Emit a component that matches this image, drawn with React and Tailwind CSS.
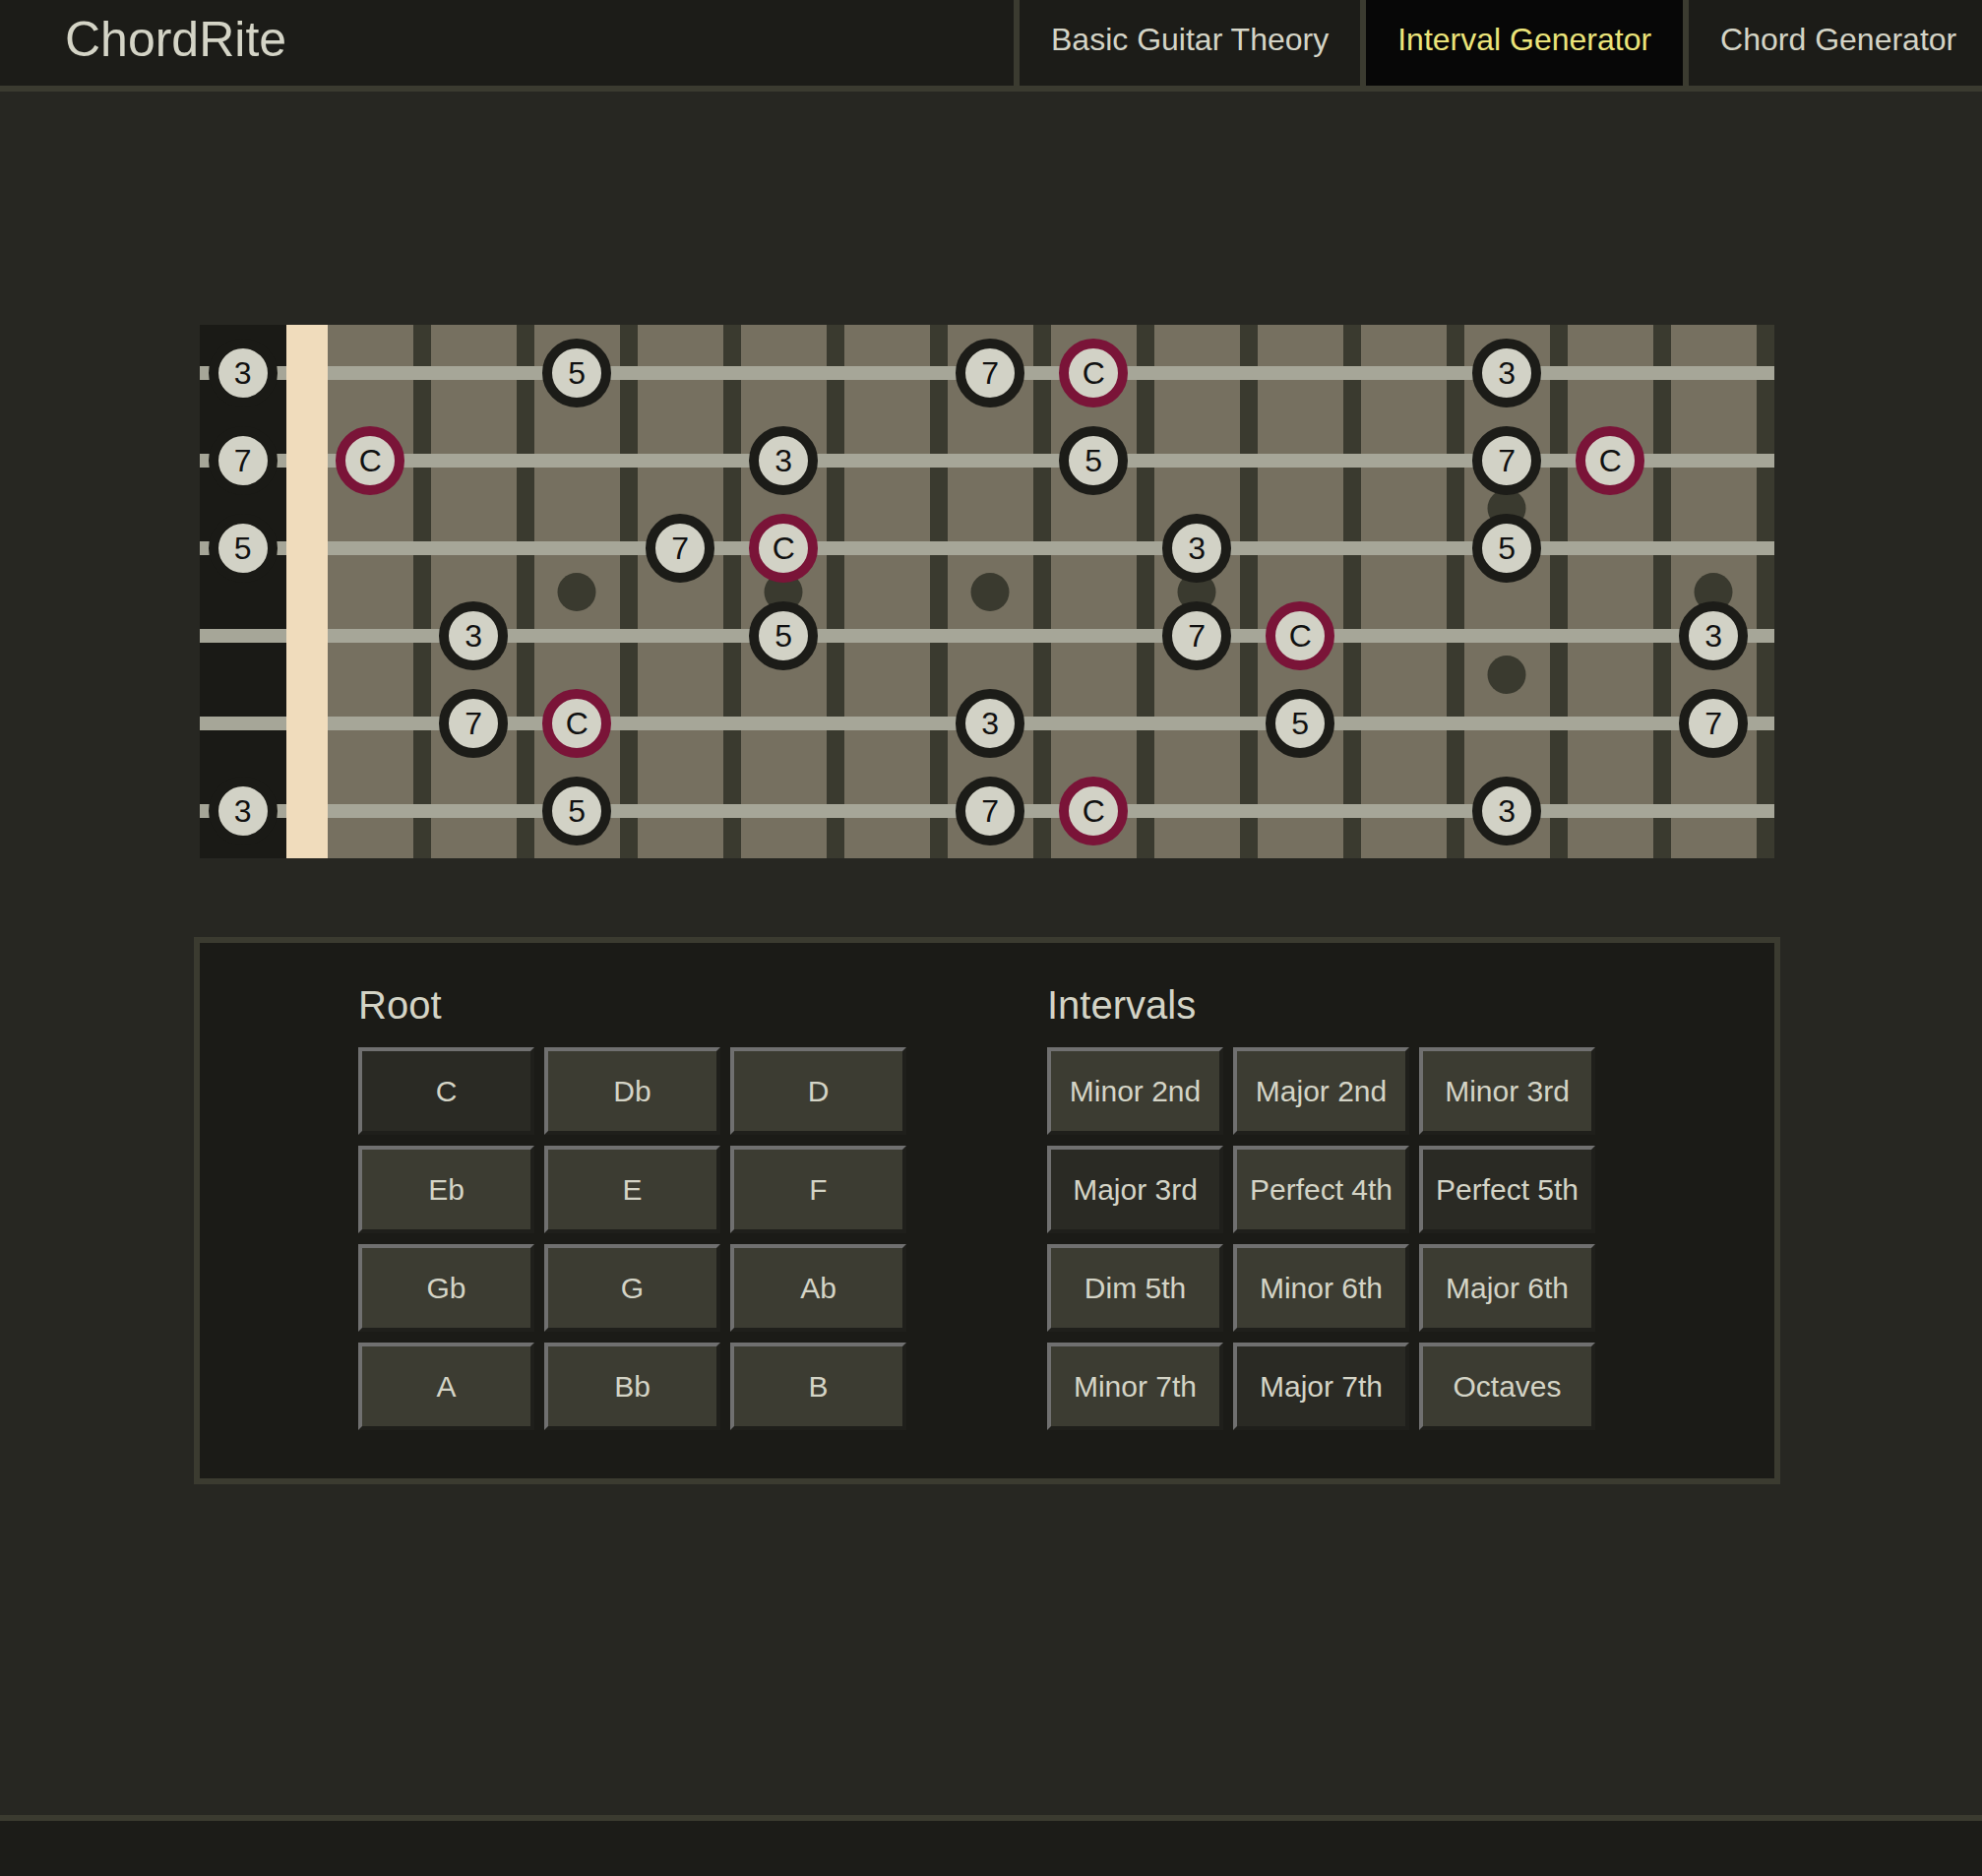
import React from "react";

const stringRows = [
    { open: "3", notes: { 2: "5", 6: "7", 7: "C", 11: "3" } },
    { open: "7", notes: { 0: "C", 4: "3", 7: "5", 11: "7", 12: "C" } },
    { open: "5", notes: { 3: "7", 4: "C", 8: "3", 11: "5" } },
    { open: null, notes: { 1: "3", 4: "5", 8: "7", 9: "C", 13: "3" } },
    { open: null, notes: { 1: "7", 2: "C", 6: "3", 9: "5", 13: "7" } },
    { open: "3", notes: { 2: "5", 6: "7", 7: "C", 11: "3" } },
];

const singleDots = [2, 4, 6, 8, 13];
const doubleDots = [11];

const roots = ["C", "Db", "D", "Eb", "E", "F", "Gb", "G", "Ab", "A", "Bb", "B"];
const intervals = [
    "Minor 2nd", "Major 2nd", "Minor 3rd",
    "Major 3rd", "Perfect 4th", "Perfect 5th",
    "Dim 5th", "Minor 6th", "Major 6th",
    "Minor 7th", "Major 7th", "Octaves",
];
const activeRoots = ["C"];
const activeIntervals = ["Major 3rd", "Perfect 5th", "Major 7th"];

const Marker = ({ label, ring }) => (
    <div
        className={`relative z-10 col-start-1 row-start-1 w-[70px] h-[70px] rounded-full border-[10px] ${ring} bg-[#d2d2c6] flex items-center justify-center text-[32px] leading-none text-[#111]`}
    >
        {label}
    </div>
);

const StringCell = ({ children }) => (
    <div className="grid h-[89px] place-items-center">
        <div className="col-start-1 row-start-1 w-full h-[14px] bg-[#a6a698]" />
        {children}
    </div>
);

const Fretboard = () => (
    <div className="flex h-[542px] ml-[6px]">
        <div className="w-[87.5px] bg-[#1a1a16] py-[4px] flex flex-col">
            {stringRows.map((row, r) => (
                <StringCell key={r}>
                    {row.open && <Marker label={row.open} ring="border-[#1a1a16]" />}
                </StringCell>
            ))}
        </div>
        <div className="w-[42px] bg-[#f0dcbc]" />
        {Array.from({ length: 14 }).map((_, c) => (
            <React.Fragment key={c}>
                <div className="relative w-[87.5px] bg-[#767060] py-[4px] flex flex-col">
                    {singleDots.includes(c) && (
                        <div className="absolute left-1/2 -translate-x-1/2 top-[252px] w-[39px] h-[39px] rounded-full bg-[#3a3a2f]" />
                    )}
                    {doubleDots.includes(c) && (
                        <>
                            <div className="absolute left-1/2 -translate-x-1/2 top-[167px] w-[39px] h-[39px] rounded-full bg-[#3a3a2f]" />
                            <div className="absolute left-1/2 -translate-x-1/2 top-[336px] w-[39px] h-[39px] rounded-full bg-[#3a3a2f]" />
                        </>
                    )}
                    {stringRows.map((row, r) => (
                        <StringCell key={r}>
                            {row.notes[c] && (
                                <Marker
                                    label={row.notes[c]}
                                    ring={row.notes[c] === "C" ? "border-[#7a1438]" : "border-[#1c1c18]"}
                                />
                            )}
                        </StringCell>
                    ))}
                </div>
                <div className="w-[17.5px] bg-[#3a3a2f] py-[4px] flex flex-col">
                    {stringRows.map((_, r) => (
                        <StringCell key={r} />
                    ))}
                </div>
            </React.Fragment>
        ))}
    </div>
);

const OptionGrid = ({ title, items, active }) => (
    <div className="w-[557px] shrink-0">
        <h2 className="text-[40px] leading-[45px] font-normal text-[#d4d4c6] mb-[20px]">{title}</h2>
        <div className="grid grid-cols-3 gap-x-[10px] gap-y-[11px]">
            {items.map((item) => (
                <button
                    key={item}
                    className={`h-[89px] border-4 border-t-[#707070] border-l-[#707070] border-r-[#1f1f1b] border-b-[#1f1f1b] flex items-center justify-center text-[30px] leading-none text-[#d4d4c6] ${
                        active.includes(item) ? "bg-[#2a2a24]" : "bg-[#3c3c32]"
                    }`}
                >
                    {item}
                </button>
            ))}
        </div>
    </div>
);

const App = () => {
    const tabs = ["Basic Guitar Theory", "Interval Generator", "Chord Generator"];

    return (
        <div className="w-[2014px] h-[1906px] overflow-hidden flex flex-col bg-[#272722] font-['Liberation_Sans',Arial,sans-serif]">
            <header className="h-[93px] shrink-0 flex bg-[#1c1c18] border-b-[6px] border-[#3b3b30] overflow-hidden">
                <div className="w-[1030px] shrink-0 pl-[66px] pt-[12px] text-[50px] leading-[56px] text-[#d4d4c6]">
                    ChordRite
                </div>
                {tabs.map((tab) => (
                    <div
                        key={tab}
                        className={`shrink-0 whitespace-nowrap border-l-[6px] border-[#3b3b30] px-8 pt-[22px] text-[32px] leading-[37px] ${
                            tab === "Interval Generator" ? "bg-[#070707] text-[#ebe47a]" : "text-[#d4d4c6]"
                        }`}
                    >
                        {tab}
                    </div>
                ))}
            </header>

            <main className="flex-1 pt-[237px]">
                <div className="ml-[197px] w-[1612px]">
                    <Fretboard />
                    <div className="mt-[80px] h-[556px] border-[6px] border-[#3b3b30] bg-[#1b1b17] pl-[161px] pt-[41px] flex gap-[143px]">
                        <OptionGrid title="Root" items={roots} active={activeRoots} />
                        <OptionGrid title="Intervals" items={intervals} active={activeIntervals} />
                    </div>
                </div>
            </main>

            <footer className="h-[62px] shrink-0 bg-[#1c1c18] border-t-[6px] border-[#3b3b30]" />
        </div>
    );
};

export default App;
